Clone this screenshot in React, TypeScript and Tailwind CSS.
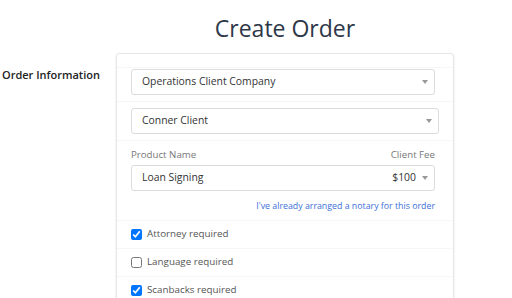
import React from "react";

const Caret = () => (
  <span className="w-0 h-0 border-l-[3px] border-r-[3px] border-t-[4px] border-l-transparent border-r-transparent border-t-[#999]" />
);

const SelectBox = ({ value, className = "" }: { value: string; className?: string }) => (
  <div
    className={`h-[26px] flex items-center justify-between pl-[10px] pr-[6px] border border-[#dcdcdc] rounded-[3px] bg-white text-[10.4px] text-[#333] ${className}`}
  >
    <span>{value}</span>
    <Caret />
  </div>
);

const CheckRow = ({ label, checked }: { label: string; checked: boolean }) => (
  <div className="h-[28px] flex items-center pl-[14px] border-t border-[#f6f6f6]">
    <input
      type="checkbox"
      defaultChecked={checked}
      className="w-[11px] h-[11px] m-0 accent-[#0075ff]"
    />
    <span className="ml-[5px] text-[9.8px] text-[#555]">{label}</span>
  </div>
);

export default function App() {
  return (
    <div
      className="w-[512px] h-[298px] overflow-hidden bg-white"
      style={{ fontFamily: '"Open Sans", sans-serif' }}
    >
      <div className="flex">
        <div className="w-[116px] shrink-0 pt-[65px] pl-[2px]">
          <h2 className="text-[11px] font-semibold text-[#222] leading-[20px]">
            Order Information
          </h2>
        </div>
        <div className="w-[338px] shrink-0 flex flex-col">
          <h1 className="mt-[12px] text-[23px] leading-[32px] text-center text-[#2d3748]">
            Create Order
          </h1>
          <div className="mt-[9px] border border-[#e6e6e6] rounded-[3px] shadow-[0_1px_3px_rgba(0,0,0,0.08)] pt-[13px]">
            <div className="border-t border-[#f6f6f6] pt-[1px] pb-[6px] pl-[14px] pr-[18px]">
              <SelectBox value="Operations Client Company" />
            </div>
            <div className="border-t border-[#f6f6f6] py-[6px] pl-[14px] pr-[14px]">
              <SelectBox value="Conner Client" />
            </div>
            <div className="border-t border-[#f6f6f6] pt-[7px] pb-[7px] pl-[14px] pr-[18px]">
              <div className="flex justify-between text-[9.7px] text-[#777] leading-[14px]">
                <span>Product Name</span>
                <span>Client Fee</span>
              </div>
              <div className="mt-[3px] h-[26px] flex items-center justify-between pl-[10px] pr-[6px] border border-[#dcdcdc] rounded-[3px] text-[10.4px] text-[#333]">
                <span>Loan Signing</span>
                <div className="flex items-center gap-[6px]">
                  <span>$100</span>
                  <Caret />
                </div>
              </div>
              <div className="mt-[8px] text-right text-[8.8px] leading-[14px] text-[#3b6fd8]">
                I've already arranged a notary for this order
              </div>
            </div>
            <CheckRow label="Attorney required" checked={true} />
            <CheckRow label="Language required" checked={false} />
            <CheckRow label="Scanbacks required" checked={true} />
          </div>
        </div>
      </div>
    </div>
  );
}
